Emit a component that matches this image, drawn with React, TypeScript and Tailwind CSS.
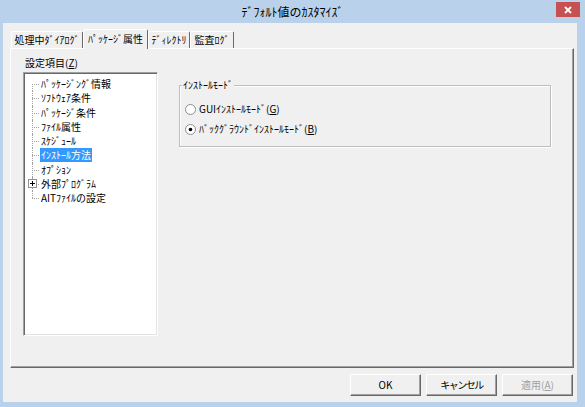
import React from "react";

const treeItems: { t: string; sel?: boolean; plus?: boolean }[] = [
  { t: "ﾊﾟｯｹｰｼﾞﾝｸﾞ情報" },
  { t: "ｿﾌﾄｳｪｱ条件" },
  { t: "ﾊﾟｯｹｰｼﾞ条件" },
  { t: "ﾌｧｲﾙ属性" },
  { t: "ｽｹｼﾞｭｰﾙ" },
  { t: "ｲﾝｽﾄｰﾙ方法", sel: true },
  { t: "ｵﾌﾟｼｮﾝ" },
  { t: "外部ﾌﾟﾛｸﾞﾗﾑ", plus: true },
  { t: "AITﾌｧｲﾙの設定" },
];

function Radio({ checked }: { checked?: boolean }) {
  return (
    <svg width="11" height="11" viewBox="0 0 11 11" className="shrink-0">
      <circle cx="5.5" cy="5.5" r="5" fill="#ffffff" stroke="#8e8e8e" strokeWidth="1" />
      {checked && <circle cx="5.5" cy="5.5" r="1.8" fill="#000000" />}
    </svg>
  );
}

function Tab({ label, w, selected }: { label: string; w: string; selected?: boolean }) {
  if (selected) {
    return (
      <div
        className={`${w} h-[20px] relative z-10 bg-[#f0f0f0] border-t border-l border-white border-r border-r-[#696969] rounded-t-[2px] flex items-center justify-center pb-[2px]`}
      >
        {label}
      </div>
    );
  }
  return (
    <div
      className={`${w} h-[17px] mb-[1px] bg-[#f0f0f0] border-t border-l border-white border-r border-r-[#696969] rounded-t-[2px] flex items-center justify-center`}
    >
      {label}
    </div>
  );
}

function Btn({ children, disabled }: { children: React.ReactNode; disabled?: boolean }) {
  return (
    <div
      className={`w-[71px] h-[22px] bg-[#f0f0f0] border border-t-white border-l-white border-r-[#696969] border-b-[#696969] shadow-[inset_-1px_-1px_0_#a0a0a0] flex items-center justify-center ${
        disabled ? "text-[#a0a0a0]" : "text-black"
      }`}
    >
      {children}
    </div>
  );
}

export default function App() {
  return (
    <div className="w-[585px] h-[407px] bg-[#b9d1ea] flex flex-col overflow-hidden font-['Noto_Sans_CJK_JP','Noto_Sans',sans-serif] text-[10px] leading-none text-black">
      {/* title bar */}
      <div className="h-[23px] flex shrink-0">
        <div className="flex-1" />
        <div className="h-[23px] flex items-center text-[12px] pt-[1px]">ﾃﾞﾌｫﾙﾄ値のｶｽﾀﾏｲｽﾞ</div>
        <div className="flex-1 flex justify-end">
          <div className="w-[24px] h-[15px] mt-[2px] mr-[5px] bg-[#c75050] flex items-center justify-center">
            <svg width="8" height="8" viewBox="0 0 8 8">
              <path d="M1 1 L7 7 M7 1 L1 7" stroke="#ffffff" strokeWidth="1.8" />
            </svg>
          </div>
        </div>
      </div>

      {/* client */}
      <div className="ml-[3px] mr-[8px] h-[379px] bg-[#f0f0f0] flex flex-col shrink-0">
        {/* tabs */}
        <div className="h-[20px] mt-[6px] -mb-[1px] ml-[8px] flex items-end">
          <Tab label="処理中ﾀﾞｲｱﾛｸﾞ" w="w-[72px]" />
          <Tab label="ﾊﾟｯｹｰｼﾞ属性" w="w-[65px]" selected />
          <Tab label="ﾃﾞｨﾚｸﾄﾘ" w="w-[42px]" />
          <Tab label="監査ﾛｸﾞ" w="w-[44px]" />
        </div>

        {/* panel */}
        <div className="ml-[7px] mr-[3px] h-[320px] border border-t-white border-l-white border-r-[#696969] border-b-[#696969] shadow-[inset_-1px_-1px_0_#a0a0a0] flex">
          {/* left column */}
          <div className="ml-[12px] pt-[8px] flex flex-col">
            <div className="h-[12px] leading-[12px] ml-[2px]">
              設定項目(<span className="underline">Z</span>)
            </div>
            <div className="mt-[3px] w-[135px] h-[264px] bg-white border border-t-[#a0a0a0] border-l-[#a0a0a0] border-r-white border-b-white shadow-[inset_1px_1px_0_#696969,inset_-1px_-1px_0_#e3e3e3] pt-[4px] pl-[1px]">
              {treeItems.map((it, i) => {
                const first = i === 0;
                const last = i === treeItems.length - 1;
                return (
                  <div key={i} className="h-[14.25px] flex items-center">
                    <div className="w-[15px] h-full relative shrink-0">
                      <div
                        className={`absolute left-[7px] border-l border-dotted border-[#a0a0a0] ${
                          first ? "top-1/2" : "top-0"
                        } ${last ? "bottom-1/2" : "bottom-0"}`}
                      />
                      <div className="absolute left-[7px] w-[7px] top-1/2 border-t border-dotted border-[#a0a0a0]" />
                      {it.plus && (
                        <svg
                          width="9"
                          height="9"
                          viewBox="0 0 9 9"
                          className="absolute left-[3px] top-[2.6px]"
                        >
                          <rect x="0.5" y="0.5" width="8" height="8" fill="#ffffff" stroke="#919191" />
                          <path d="M2 4.5 H7 M4.5 2 V7" stroke="#000000" strokeWidth="1" />
                        </svg>
                      )}
                    </div>
                    <div
                      className={`h-[14px] leading-[14px] px-[1px] whitespace-nowrap ${
                        it.sel ? "bg-[#3399ff] text-white" : ""
                      }`}
                    >
                      {it.t}
                    </div>
                  </div>
                );
              })}
            </div>
          </div>

          {/* right column */}
          <div className="ml-[21px] mt-[36px]">
            <div className="relative w-[372px] h-[62px] border border-[#bdbdbd] shadow-[inset_1px_1px_0_#ffffff,1px_1px_0_#ffffff] pt-[13px] pl-[5px]">
              <span className="absolute left-[2px] -top-[7px] h-[12px] leading-[12px] px-[1px] bg-[#f0f0f0]">
                ｲﾝｽﾄｰﾙﾓｰﾄﾞ
              </span>
              <div className="h-[20px] flex items-center gap-[3px]">
                <Radio />
                <span>
                  GUIｲﾝｽﾄｰﾙﾓｰﾄﾞ(<span className="underline">G</span>)
                </span>
              </div>
              <div className="h-[20px] flex items-center gap-[3px]">
                <Radio checked />
                <span>
                  ﾊﾞｯｸｸﾞﾗｳﾝﾄﾞｲﾝｽﾄｰﾙﾓｰﾄﾞ(<span className="underline">B</span>)
                </span>
              </div>
            </div>
          </div>
        </div>

        {/* buttons */}
        <div className="mt-[6px] mr-[4px] flex justify-end gap-[5px]">
          <Btn>OK</Btn>
          <Btn>
            <span className="tracking-[-1.5px]">キャンセル</span>
          </Btn>
          <Btn disabled>
            適用(<span className="underline">A</span>)
          </Btn>
        </div>
      </div>
    </div>
  );
}
